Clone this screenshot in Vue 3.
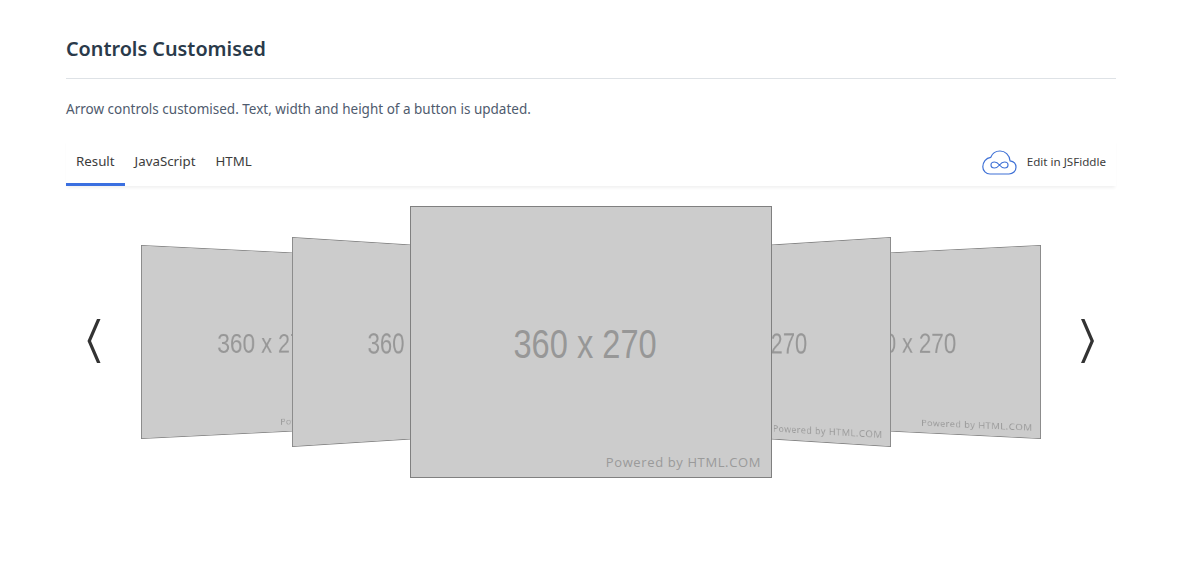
<template>
  <div class="page">
    <h2 class="title">Controls Customised</h2>
    <p class="desc">Arrow controls customised. Text, width and height of a button is updated.</p>

    <div class="tabbar">
      <div class="tabs">
        <a v-for="tab in tabs" :key="tab" class="tab" :class="{ active: tab === 'Result' }">{{ tab }}</a>
      </div>
      <a class="fiddle">
        <svg class="cloud" width="35" height="25" viewBox="0 0 35 25" fill="none" stroke="#3f71d6" stroke-width="1.2">
          <path d="M8 24H27C31 24 34 21 34 17.300C34 13.800 31.500 11.300 28 10.800C27.500 4.800 23 1 18 1C13.500 1 10.300 3.300 8.800 7.300C3.800 7.800 .8 12.300 .8 16.800C.8 20.800 4 24 8 24Z" />
          <path d="M17.500 15C15.500 12.500 14 12 12.500 12C10.500 12 9 13.300 9 15C9 16.700 10.500 18 12.500 18C14 18 15.500 17.500 17.500 15C19.500 12.500 21 12 22.500 12C24.500 12 26 13.300 26 15C26 16.700 24.500 18 22.500 18C21 18 19.500 17.500 17.500 15Z" />
        </svg>
        <span>Edit in JSFiddle</span>
      </a>
    </div>

    <div class="carousel">
      <button class="arrow" aria-label="Previous">
        <svg width="15" height="46" viewBox="0 0 15 46" fill="#333">
          <polygon points="0.500,23 10,1 13.500,1 4,23 13.500,45 10,45" />
        </svg>
      </button>

      <div v-for="card in cards" :key="card" class="card" :class="card">
        <span class="size"><span class="size-text">360 x 270</span></span>
        <span class="powered">Powered by HTML.COM</span>
      </div>

      <button class="arrow" aria-label="Next">
        <svg width="15" height="46" viewBox="0 0 15 46" fill="#333">
          <polygon points="1,1 4.500,1 14,23 4.500,45 1,45 10.500,23" />
        </svg>
      </button>
    </div>
  </div>
</template>

<script setup>
const tabs = ['Result', 'JavaScript', 'HTML']
const cards = ['far-left', 'near-left', 'far-right', 'near-right', 'center']
</script>

<style scoped>
.page {
  width: 1050px;
  margin-left: 66px;
  font-family: "Noto Sans", "Open Sans", sans-serif;
}

.title {
  margin: 0;
  height: 79px;
  box-sizing: border-box;
  padding-top: 35px;
  border-bottom: 1px solid #dee2e6;
  font-size: 19.8px;
  line-height: 28px;
  font-weight: 600;
  color: #2a3a4a;
}

.desc {
  margin: 0;
  padding-top: 20px;
  font-size: 13.5px;
  line-height: 20px;
  color: #4f5b6e;
}

.tabbar {
  margin-top: 20px;
  height: 47px;
  display: flex;
  justify-content: space-between;
  box-sizing: border-box;
  box-shadow: 0 3px 3px -1px rgba(0, 0, 0, 0.06);
}

.tabs {
  display: flex;
}

.tab {
  padding: 0 10px;
  font-size: 13.3px;
  line-height: 44px;
  color: #3c3c3c;
  height: 47px;
  box-sizing: border-box;
}

.tab.active {
  border-bottom: 3px solid #3a6fe0;
}

.fiddle {
  display: flex;
  align-items: center;
  gap: 10px;
  padding-right: 10px;
  height: 45px;
  font-size: 11.6px;
  color: #3c3c3c;
}

.cloud {
  margin-top: 2px;
}

.carousel {
  position: relative;
  height: 310px;
  box-sizing: border-box;
  padding: 0 21px;
  display: flex;
  justify-content: space-between;
  align-items: center;
}

.arrow {
  padding: 0;
  border: 0;
  background: none;
  display: block;
  height: 46px;
  margin-bottom: 1px;
}

.card {
  position: absolute;
  top: 20px;
  width: 362px;
  height: 272px;
  box-sizing: border-box;
  border: 1px solid #808080;
  background: #ccc;
}

.size {
  position: absolute;
  left: 0;
  right: 11px;
  top: 109px;
  text-align: center;
  font-family: "Liberation Sans", Arial, sans-serif;
  font-size: 41px;
  line-height: 56px;
  color: #979797;
}

.size-text {
  display: inline-block;
  white-space: nowrap;
  transform: scaleX(0.795);
}

.powered {
  position: absolute;
  right: 10px;
  bottom: 6px;
  font-family: "Open Sans", sans-serif;
  font-size: 13px;
  line-height: 18px;
  letter-spacing: 0.62px;
  color: #9a9a9a;
  white-space: nowrap;
}

.center {
  left: 344px;
}

.near-left {
  left: 225.5px;
  transform-origin: 0 50%;
  transform: matrix3d(0.99, 0, 0, 0.0006, 0, 1, 0, 0, 0, 0, 1, 0, 0, 0, 0, 1.295);
}

.far-left {
  left: 75px;
  transform-origin: 0 50%;
  transform: matrix3d(1.075, 0, 0, 0.00055, 0, 1, 0, 0, 0, 0, 1, 0, 0, 0, 0, 1.402);
}

.near-right {
  left: 462.5px;
  transform-origin: 100% 50%;
  transform: matrix3d(0.99, 0, 0, -0.0006, 0, 1, 0, 0, 0, 0, 1, 0, 0, 0, 0, 1.295);
}

.far-right {
  left: 612.5px;
  transform-origin: 100% 50%;
  transform: matrix3d(1.075, 0, 0, -0.00055, 0, 1, 0, 0, 0, 0, 1, 0, 0, 0, 0, 1.402);
}
</style>
